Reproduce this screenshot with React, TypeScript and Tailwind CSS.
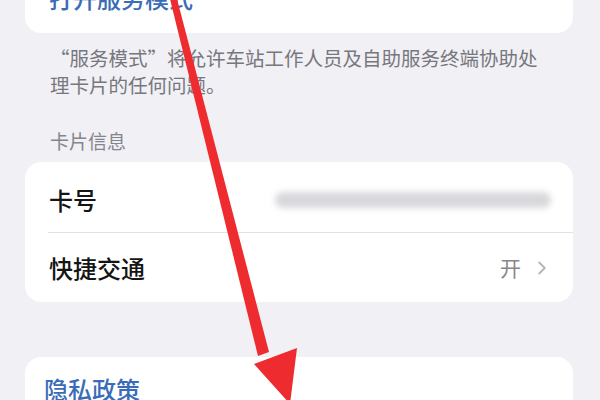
import * as React from 'react';
import { ChevronRight } from 'lucide-react';

const font = { fontFamily: '"Noto Sans CJK SC", "Noto Sans", sans-serif' };

function Arrow() {
  return (
    <svg className="pointer-events-none absolute inset-0" width="600" height="400" viewBox="0 0 600 400">
      <polygon points="169,-5 176,-5 269,352 258,356" fill="#ee2b2f" />
      <polygon points="254,364 297,348 290,404" fill="#ee2b2f" />
    </svg>
  );
}

export default function App() {
  return (
    <div className="relative h-[400px] w-[600px] overflow-hidden bg-[#f0f0f5]" style={font}>
      <div className="flex flex-col pl-[25px] pr-[27px]">
        <div className="mt-[-37px] flex h-[70px] items-center rounded-[16px] bg-white px-[24px]">
          <span className="text-[24px] font-medium text-[#3a6cb8]">打开服务模式</span>
        </div>

        <p className="mt-[11px] px-[25px] text-[19.5px] leading-[27px] text-[#77777d]">
          “服务模式”将允许车站工作人员及自助服务终端协助处理卡片的任何问题。
        </p>

        <div className="mt-[30px] px-[25px] text-[19px] leading-[26px] text-[#85858b]">卡片信息</div>

        <div className="mt-[8px] flex flex-col rounded-[16px] bg-white">
          <div className="flex h-[70px] items-center justify-between pl-[24px] pr-[22px] pt-[6px]">
            <span className="text-[24px] font-medium text-[#151515]">卡号</span>
            <div className="h-[16px] w-[276px] rounded-full bg-[#d8d8dc] blur-[3px]" />
          </div>
          <div className="ml-[23px] h-px bg-[#e2e2e6]" />
          <div className="flex h-[69px] items-center justify-between pl-[24px] pr-[20px]">
            <span className="text-[24px] font-medium text-[#151515]">快捷交通</span>
            <div className="flex items-center gap-[10px]">
              <span className="text-[21px] text-[#86868b]">开</span>
              <ChevronRight className="h-[22px] w-[22px] text-[#b4b4b9]" strokeWidth={2} />
            </div>
          </div>
        </div>

        <div className="mt-[55px] flex h-[70px] items-start rounded-[16px] bg-white px-[19px] pt-[16px]">
          <span className="text-[24px] font-medium leading-[32px] text-[#3a6cb8]">隐私政策</span>
        </div>
      </div>
      <Arrow />
    </div>
  );
}
